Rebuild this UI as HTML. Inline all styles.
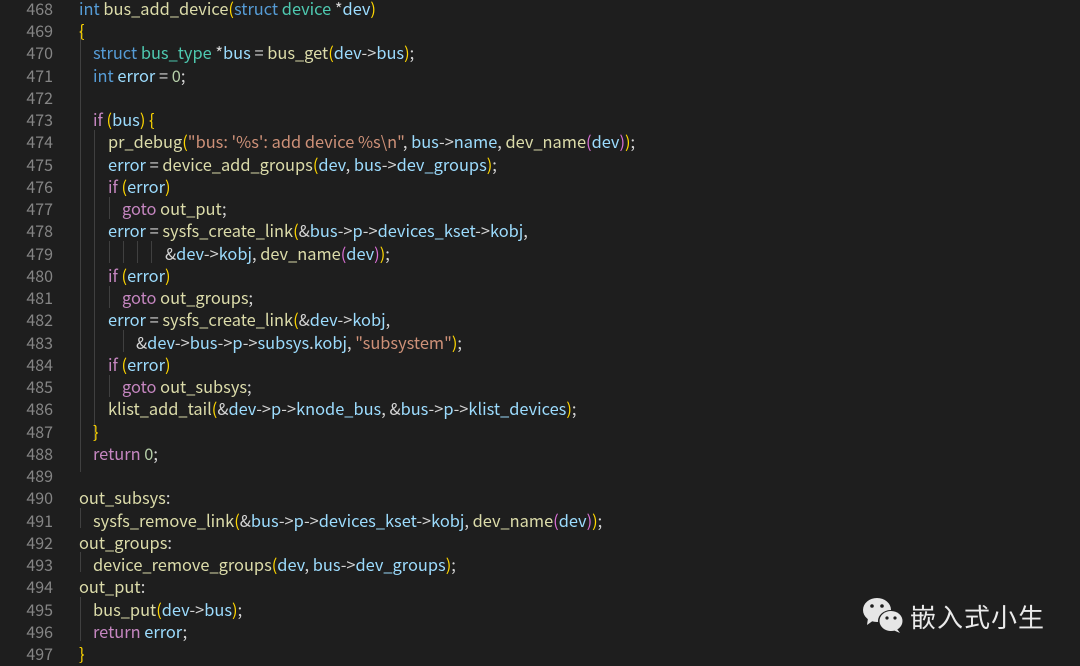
<!DOCTYPE html><html><head><meta charset="utf-8"><style>
body{margin:0;width:1080px;height:666px;background:#1e1e1e;overflow:hidden;position:relative;font-family:"Noto Sans CJK SC","Liberation Sans",sans-serif;font-size:16.4px;color:#d4d4d4}
.l{position:absolute;left:0;height:22px;line-height:22px;white-space:pre;width:1080px}
.n{position:absolute;right:1027px;color:#858585;text-align:right;font-size:16px}
.c{position:absolute}
.k{color:#569cd6}.f{color:#dcdcaa}.v{color:#9cdcfe}.t{color:#4ec9b0}.p{color:#c586c0}.s{color:#ce9178}.m{color:#b5cea8}.b{color:#ffd700}.q{color:#da70d6}.g{position:absolute;width:1px;background:#404040}
.wc{position:absolute;left:862px;top:597px}
.brand{position:absolute;left:910px;top:598px;font-size:26px;color:#eaeaea;letter-spacing:1px;font-family:"Noto Sans CJK SC",sans-serif}
</style></head><body>
<div class="g" style="left:80px;top:30px;height:442px"></div>
<div class="g" style="left:94px;top:130px;height:310px"></div>
<div class="g" style="left:109px;top:197px;height:22px"></div>
<div class="g" style="left:109px;top:286px;height:22px"></div>
<div class="g" style="left:109px;top:375px;height:22px"></div>
<div class="g" style="left:109px;top:241px;height:22px"></div><div class="g" style="left:123px;top:241px;height:22px"></div><div class="g" style="left:137px;top:241px;height:22px"></div><div class="g" style="left:151px;top:241px;height:22px"></div>
<div class="g" style="left:123px;top:330px;height:22px"></div>
<div class="g" style="left:80px;top:508px;height:20px"></div><div class="g" style="left:80px;top:552px;height:20px"></div><div class="g" style="left:80px;top:597px;height:44px"></div>
<div class="l" style="top:-3px"><span class="n">468</span><span class="c" style="left:79px"><span class="k">int</span> <span class="f">bus_add_device</span><span class="b">(</span><span class="k">struct</span> <span class="t">device</span> *<span class="v">dev</span><span class="b">)</span></span></div>
<div class="l" style="top:19px"><span class="n">469</span><span class="c" style="left:79px"><span class="b">{</span></span></div>
<div class="l" style="top:41px"><span class="n">470</span><span class="c" style="left:93px"><span class="k">struct</span> <span class="t">bus_type</span> *<span class="v">bus</span> = <span class="f">bus_get</span><span class="b">(</span><span class="v">dev</span>-&gt;<span class="v">bus</span><span class="b">)</span>;</span></div>
<div class="l" style="top:64px"><span class="n">471</span><span class="c" style="left:93px"><span class="k">int</span> <span class="v">error</span> = <span class="m">0</span>;</span></div>
<div class="l" style="top:86px"><span class="n">472</span></div>
<div class="l" style="top:108px"><span class="n">473</span><span class="c" style="left:93px"><span class="p">if</span> <span class="b">(</span><span class="v">bus</span><span class="b">)</span> <span class="b">{</span></span></div>
<div class="l" style="top:130px"><span class="n">474</span><span class="c" style="left:108px"><span class="f">pr_debug</span><span class="b">(</span><span class="s">"bus: '%s': add device %s\n"</span>, <span class="v">bus</span>-&gt;<span class="v">name</span>, <span class="f">dev_name</span><span class="q">(</span><span class="v">dev</span><span class="q">)</span><span class="b">)</span>;</span></div>
<div class="l" style="top:153px"><span class="n">475</span><span class="c" style="left:108px"><span class="v">error</span> = <span class="f">device_add_groups</span><span class="b">(</span><span class="v">dev</span>, <span class="v">bus</span>-&gt;<span class="v">dev_groups</span><span class="b">)</span>;</span></div>
<div class="l" style="top:175px"><span class="n">476</span><span class="c" style="left:108px"><span class="p">if</span> <span class="b">(</span><span class="v">error</span><span class="b">)</span></span></div>
<div class="l" style="top:197px"><span class="n">477</span><span class="c" style="left:122px"><span class="p">goto</span> <span class="f">out_put</span>;</span></div>
<div class="l" style="top:219px"><span class="n">478</span><span class="c" style="left:108px"><span class="v">error</span> = <span class="f">sysfs_create_link</span><span class="b">(</span>&amp;<span class="v">bus</span>-&gt;<span class="v">p</span>-&gt;<span class="v">devices_kset</span>-&gt;<span class="v">kobj</span>,</span></div>
<div class="l" style="top:242px"><span class="n">479</span><span class="c" style="left:165px">&amp;<span class="v">dev</span>-&gt;<span class="v">kobj</span>, <span class="f">dev_name</span><span class="q">(</span><span class="v">dev</span><span class="q">)</span><span class="b">)</span>;</span></div>
<div class="l" style="top:264px"><span class="n">480</span><span class="c" style="left:108px"><span class="p">if</span> <span class="b">(</span><span class="v">error</span><span class="b">)</span></span></div>
<div class="l" style="top:286px"><span class="n">481</span><span class="c" style="left:122px"><span class="p">goto</span> <span class="f">out_groups</span>;</span></div>
<div class="l" style="top:308px"><span class="n">482</span><span class="c" style="left:108px"><span class="v">error</span> = <span class="f">sysfs_create_link</span><span class="b">(</span>&amp;<span class="v">dev</span>-&gt;<span class="v">kobj</span>,</span></div>
<div class="l" style="top:331px"><span class="n">483</span><span class="c" style="left:136px">&amp;<span class="v">dev</span>-&gt;<span class="v">bus</span>-&gt;<span class="v">p</span>-&gt;<span class="v">subsys</span>.<span class="v">kobj</span>, <span class="s">"subsystem"</span><span class="b">)</span>;</span></div>
<div class="l" style="top:353px"><span class="n">484</span><span class="c" style="left:108px"><span class="p">if</span> <span class="b">(</span><span class="v">error</span><span class="b">)</span></span></div>
<div class="l" style="top:375px"><span class="n">485</span><span class="c" style="left:122px"><span class="p">goto</span> <span class="f">out_subsys</span>;</span></div>
<div class="l" style="top:397px"><span class="n">486</span><span class="c" style="left:108px"><span class="f">klist_add_tail</span><span class="b">(</span>&amp;<span class="v">dev</span>-&gt;<span class="v">p</span>-&gt;<span class="v">knode_bus</span>, &amp;<span class="v">bus</span>-&gt;<span class="v">p</span>-&gt;<span class="v">klist_devices</span><span class="b">)</span>;</span></div>
<div class="l" style="top:420px"><span class="n">487</span><span class="c" style="left:93px"><span class="b">}</span></span></div>
<div class="l" style="top:442px"><span class="n">488</span><span class="c" style="left:93px"><span class="p">return</span> <span class="m">0</span>;</span></div>
<div class="l" style="top:464px"><span class="n">489</span></div>
<div class="l" style="top:486px"><span class="n">490</span><span class="c" style="left:79px"><span class="f">out_subsys</span>:</span></div>
<div class="l" style="top:509px"><span class="n">491</span><span class="c" style="left:93px"><span class="f">sysfs_remove_link</span><span class="b">(</span>&amp;<span class="v">bus</span>-&gt;<span class="v">p</span>-&gt;<span class="v">devices_kset</span>-&gt;<span class="v">kobj</span>, <span class="f">dev_name</span><span class="q">(</span><span class="v">dev</span><span class="q">)</span><span class="b">)</span>;</span></div>
<div class="l" style="top:531px"><span class="n">492</span><span class="c" style="left:79px"><span class="f">out_groups</span>:</span></div>
<div class="l" style="top:553px"><span class="n">493</span><span class="c" style="left:93px"><span class="f">device_remove_groups</span><span class="b">(</span><span class="v">dev</span>, <span class="v">bus</span>-&gt;<span class="v">dev_groups</span><span class="b">)</span>;</span></div>
<div class="l" style="top:575px"><span class="n">494</span><span class="c" style="left:79px"><span class="f">out_put</span>:</span></div>
<div class="l" style="top:598px"><span class="n">495</span><span class="c" style="left:93px"><span class="f">bus_put</span><span class="b">(</span><span class="v">dev</span>-&gt;<span class="v">bus</span><span class="b">)</span>;</span></div>
<div class="l" style="top:620px"><span class="n">496</span><span class="c" style="left:93px"><span class="p">return</span> <span class="v">error</span>;</span></div>
<div class="l" style="top:642px"><span class="n">497</span><span class="c" style="left:79px"><span class="b">}</span></span></div>
<svg class="wc" width="44" height="38" viewBox="0 0 44 38">
<ellipse cx="15" cy="13" rx="14" ry="12" fill="#e6e6e6"/><path d="M6 21 L5 28 L12 23Z" fill="#e6e6e6"/>
<ellipse cx="29" cy="24" rx="13" ry="11" fill="#1e1e1e"/>
<ellipse cx="29" cy="24" rx="11.5" ry="10" fill="#e6e6e6"/><path d="M35 32 L38 36 L31 33Z" fill="#e6e6e6"/>
<circle cx="10" cy="9" r="1.8" fill="#1e1e1e"/><circle cx="20" cy="9" r="1.8" fill="#1e1e1e"/>
<circle cx="25" cy="21" r="1.6" fill="#1e1e1e"/><circle cx="33" cy="21" r="1.6" fill="#1e1e1e"/>
</svg>
<div class="brand">嵌入式小生</div>
</body></html>
